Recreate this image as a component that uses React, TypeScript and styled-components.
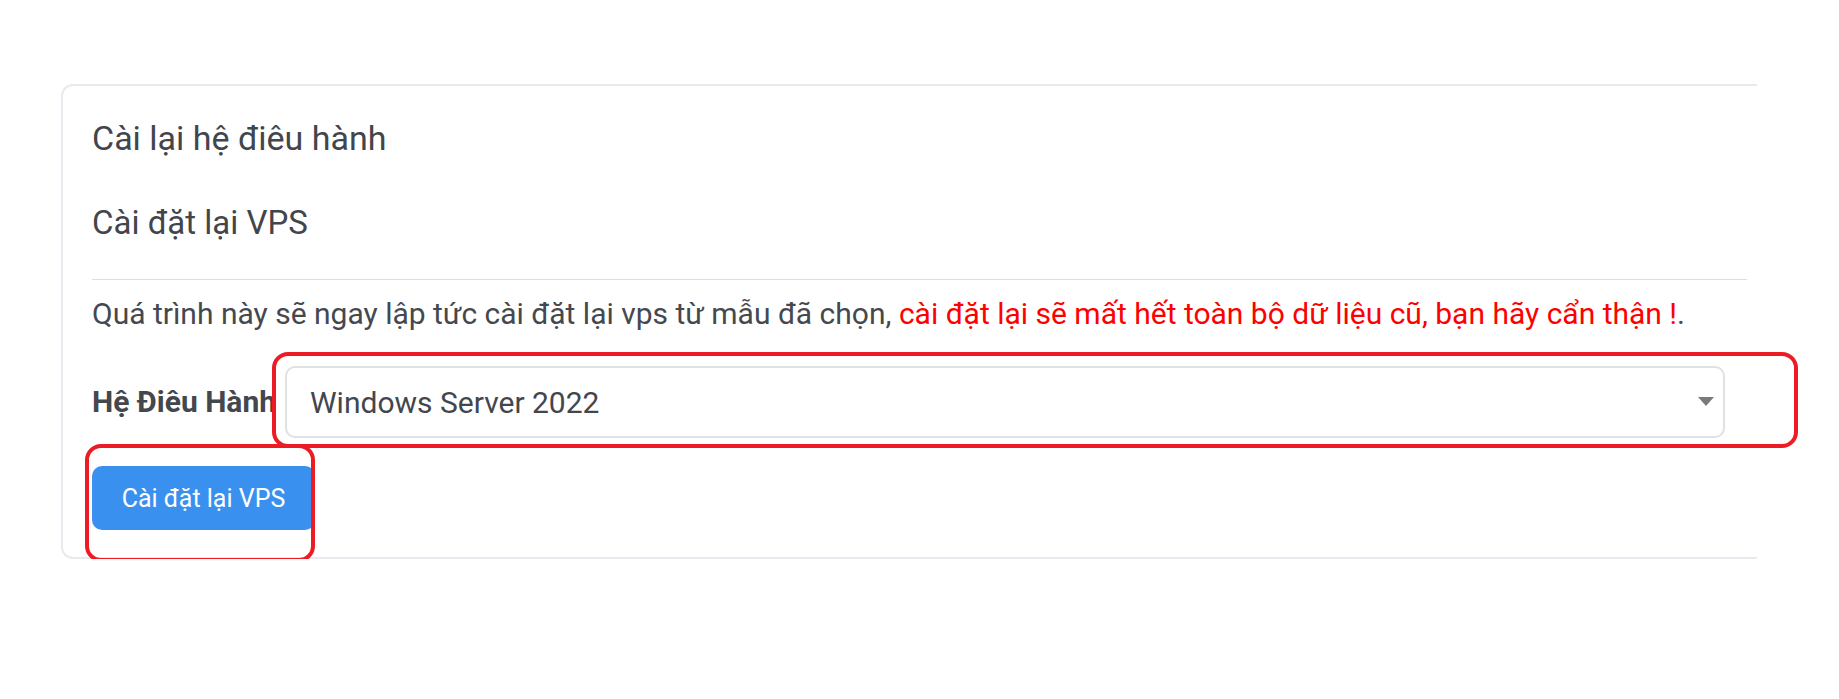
import React from "react";
import styled, { createGlobalStyle } from "styled-components";

const GlobalStyle = createGlobalStyle`
  html, body {
    margin: 0;
    padding: 0;
    background: #ffffff;
  }
  body {
    font-family: Roboto, "Noto Sans", "Liberation Sans", sans-serif;
    color: #45494f;
  }
`;

const Page = styled.div`
  padding: 84px 0 0 61px;
`;

const Card = styled.section`
  position: relative;
  box-sizing: border-box;
  width: 1696px;
  border: 2px solid #e9e9ef;
  border-right: none;
  border-radius: 12px 0 0 12px;
  padding: 32px 10px 27px 29px;
`;

const Title = styled.h4`
  margin: 0;
  font-size: 34px;
  line-height: 40px;
  font-weight: 400;
  color: #42464c;
`;

const SubTitle = styled(Title)`
  margin-top: 45px;
  font-size: 33px;
`;

const Divider = styled.hr`
  margin: 36px 0 0;
  border: none;
  border-top: 1px solid #dedede;
`;

const Notice = styled.p`
  margin: 13px 0 0;
  font-size: 30px;
  line-height: 42px;
  color: #45494f;
`;

const Danger = styled.span`
  color: #ff0000;
`;

const FormRow = styled.div`
  display: flex;
  align-items: center;
  margin-top: 31px;
`;

const Label = styled.label`
  width: 193px;
  flex-shrink: 0;
  font-size: 30px;
  line-height: 42px;
  font-weight: 700;
  color: #44474c;
  white-space: nowrap;
`;

const SelectWrap = styled.div`
  position: relative;
  width: 1440px;
`;

const Select = styled.select`
  box-sizing: border-box;
  width: 100%;
  height: 72px;
  padding: 0 50px 0 23px;
  border: 2px solid #e0e1e6;
  border-radius: 10px;
  background: #ffffff;
  appearance: none;
  font-family: inherit;
  font-size: 30px;
  color: #43474d;
  outline: none;
`;

const Caret = styled.svg`
  position: absolute;
  right: 11px;
  top: 31px;
  pointer-events: none;
`;

const SubmitButton = styled.button`
  display: block;
  box-sizing: border-box;
  margin-top: 28px;
  width: 223px;
  height: 64px;
  border: none;
  border-radius: 10px;
  background: #3a90ee;
  color: #ffffff;
  font-family: inherit;
  font-size: 25px;
  cursor: pointer;
`;

const Marker = styled.div<{ $left: number; $top: number; $w: number; $h: number }>`
  position: absolute;
  box-sizing: border-box;
  left: ${(p) => p.$left}px;
  top: ${(p) => p.$top}px;
  width: ${(p) => p.$w}px;
  height: ${(p) => p.$h}px;
  border: 4px solid #ed1c24;
  border-radius: 16px;
  pointer-events: none;
`;

export default function App() {
  return (
    <>
      <GlobalStyle />
      <Page>
        <Card>
          <Title>Cài lại hệ điêu hành</Title>
          <SubTitle>Cài đặt lại VPS</SubTitle>
          <Divider />
          <Notice>
            Quá trình này sẽ ngay lập tức cài đặt lại vps từ mẫu đã chọn,{" "}
            <Danger>cài đặt lại sẽ mất hết toàn bộ dữ liệu cũ, bạn hãy cẩn thận !</Danger>.
          </Notice>
          <FormRow>
            <Label htmlFor="os">Hệ Điêu Hành</Label>
            <SelectWrap>
              <Select id="os" defaultValue="ws2022">
                <option value="ws2022">Windows Server 2022</option>
                <option value="ws2019">Windows Server 2019</option>
                <option value="ubuntu">Ubuntu 22.04</option>
              </Select>
              <Caret width="16" height="9" viewBox="0 0 16 9">
                <polygon points="0,0 16,0 8,9" fill="#7a7a7a" />
              </Caret>
            </SelectWrap>
          </FormRow>
          <SubmitButton type="button">Cài đặt lại VPS</SubmitButton>
          <Marker $left={209} $top={266} $w={1526} $h={96} />
          <Marker $left={22} $top={358} $w={230} $h={118} />
        </Card>
      </Page>
    </>
  );
}
